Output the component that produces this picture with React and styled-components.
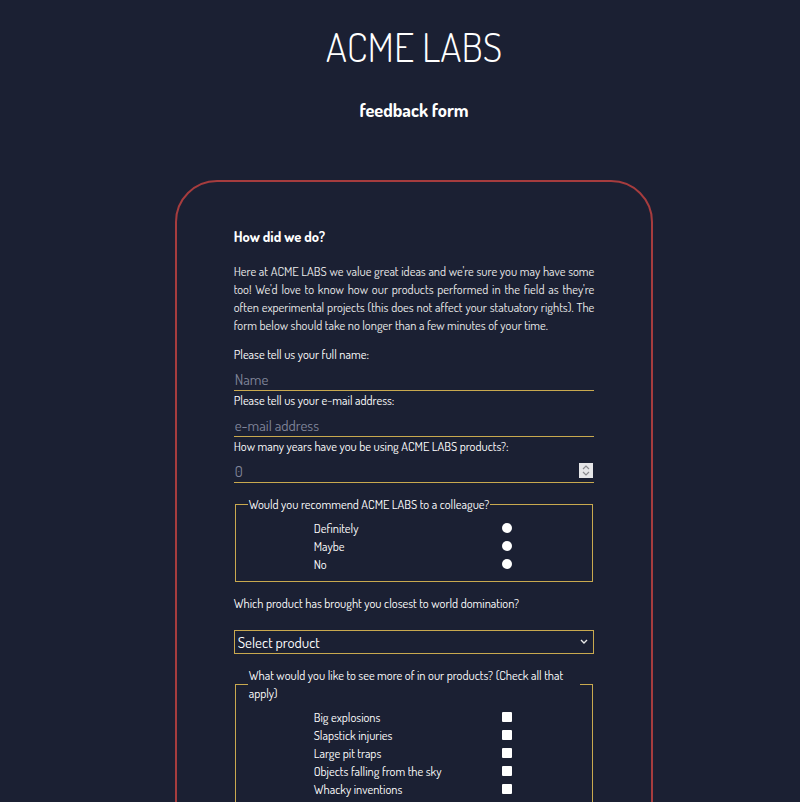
import React from 'react';
import styled, { createGlobalStyle } from 'styled-components';

const GOLD = '#c9a94f';

const GlobalStyle = createGlobalStyle`
  body {
    margin: 0;
    background: #1b2033;
    color: #fff;
    font-family: "Dosis", "Liberation Sans", sans-serif;
  }
`;

const Page = styled.div`
  padding: 0 0 40px 28px;
`;

const Title = styled.h1`
  margin: 22px 0 0;
  font-size: 40px;
  font-weight: 300;
  line-height: 48px;
  text-align: center;
`;

const Subtitle = styled.h2`
  margin: 28px 0 0;
  font-size: 18.4px;
  font-weight: 700;
  line-height: 24px;
  text-align: center;
`;

const Card = styled.div`
  box-sizing: border-box;
  width: 62%;
  margin: 58px auto 0;
  padding: 44px 57px 40px;
  border: 2px solid #a63c3e;
  border-radius: 42px;
`;

const Heading = styled.h3`
  margin: 0;
  font-size: 14.6px;
  font-weight: 700;
  line-height: 20px;
`;

const Intro = styled.p`
  margin: 16px 0 11px;
  font-size: 12.5px;
  line-height: 18px;
  text-align: justify;
  color: #ececec;
`;

const Label = styled.label`
  display: block;
  font-size: 12.5px;
  line-height: 18px;
`;

const TextInput = styled.input`
  display: block;
  box-sizing: border-box;
  width: 100%;
  height: 28px;
  padding: 6px 1px 0;
  background: transparent;
  border: none;
  border-bottom: 1px solid ${GOLD};
  color: #fff;
  font-family: inherit;
  font-size: 15px;
  outline: none;
  &::placeholder {
    color: #80859a;
  }
`;

const NumberWrap = styled.div`
  position: relative;
`;

const Spinner = styled.span`
  position: absolute;
  right: 1px;
  top: 8px;
  width: 14px;
  height: 15px;
  background: #e6e6e8;
  display: flex;
  align-items: center;
  justify-content: center;
`;

const Fieldset = styled.fieldset`
  margin: ${(p) => p.$top}px 1px 0;
  padding: 6px 12px 8px;
  border: 1px solid ${GOLD};
`;

const Legend = styled.legend`
  padding: 0 1px;
  font-size: 12.5px;
  line-height: 18px;
`;

const OptionRow = styled.label`
  display: grid;
  grid-template-columns: 66px 188px 10px;
  align-items: center;
  font-size: 12.5px;
  line-height: 18px;
  & > span {
    grid-column: 2;
  }
`;

const Radio = styled.input`
  appearance: none;
  grid-column: 3;
  margin: 0;
  width: 10px;
  height: 10px;
  border-radius: 50%;
  background: #fff;
`;

const Check = styled(Radio)`
  border-radius: 1px;
`;

const Question = styled.p`
  margin: 12px 0 18px;
  font-size: 12.5px;
  line-height: 18px;
`;

const SelectWrap = styled.div`
  position: relative;
`;

const Select = styled.select`
  display: block;
  box-sizing: border-box;
  width: 100%;
  height: 24px;
  padding: 0 3px;
  appearance: none;
  background: transparent;
  border: 1px solid ${GOLD};
  border-radius: 0;
  color: #fff;
  font-family: inherit;
  font-size: 15px;
`;

const Chevron = styled.svg`
  position: absolute;
  right: 6px;
  top: 9px;
  pointer-events: none;
`;

const recommend = ['Definitely', 'Maybe', 'No'];
const features = [
  'Big explosions',
  'Slapstick injuries',
  'Large pit traps',
  'Objects falling from the sky',
  'Whacky inventions',
];

export default function App() {
  return (
    <Page>
      <GlobalStyle />
      <Title>ACME LABS</Title>
      <Subtitle>feedback form</Subtitle>
      <Card>
        <Heading>How did we do?</Heading>
        <Intro>
          Here at ACME LABS we value great ideas and we're sure you may have some too! We'd love to know how our
          products performed in the field as they're often experimental projects (this does not affect your
          statuatory rights). The form below should take no longer than a few minutes of your time.
        </Intro>

        <Label htmlFor="name">Please tell us your full name:</Label>
        <TextInput id="name" type="text" placeholder="Name" />
        <Label htmlFor="email">Please tell us your e-mail address:</Label>
        <TextInput id="email" type="email" placeholder="e-mail address" />
        <Label htmlFor="years">How many years have you be using ACME LABS products?:</Label>
        <NumberWrap>
          <TextInput id="years" type="text" placeholder="0" />
          <Spinner>
            <svg width="8" height="11" viewBox="0 0 8 11">
              <path d="M1 4 L4 1 L7 4 M1 7 L4 10 L7 7" fill="none" stroke="#8a8a8e" strokeWidth="1.2" />
            </svg>
          </Spinner>
        </NumberWrap>

        <Fieldset $top={12}>
          <Legend>Would you recommend ACME LABS to a colleague?</Legend>
          {recommend.map((r) => (
            <OptionRow key={r}>
              <span>{r}</span>
              <Radio type="radio" name="recommend" />
            </OptionRow>
          ))}
        </Fieldset>

        <Question>Which product has brought you closest to world domination?</Question>
        <SelectWrap>
          <Select defaultValue="">
            <option value="">Select product</option>
            <option>Rocket skates</option>
            <option>Giant magnet</option>
            <option>Portable hole</option>
          </Select>
          <Chevron width="8" height="6" viewBox="0 0 8 6">
            <path d="M1 1 L4 4 L7 1" fill="none" stroke="#e8e8e8" strokeWidth="1.4" />
          </Chevron>
        </SelectWrap>

        <Fieldset $top={12}>
          <Legend>What would you like to see more of in our products? (Check all that apply)</Legend>
          {features.map((f) => (
            <OptionRow key={f}>
              <span>{f}</span>
              <Check type="checkbox" />
            </OptionRow>
          ))}
        </Fieldset>
      </Card>
    </Page>
  );
}
